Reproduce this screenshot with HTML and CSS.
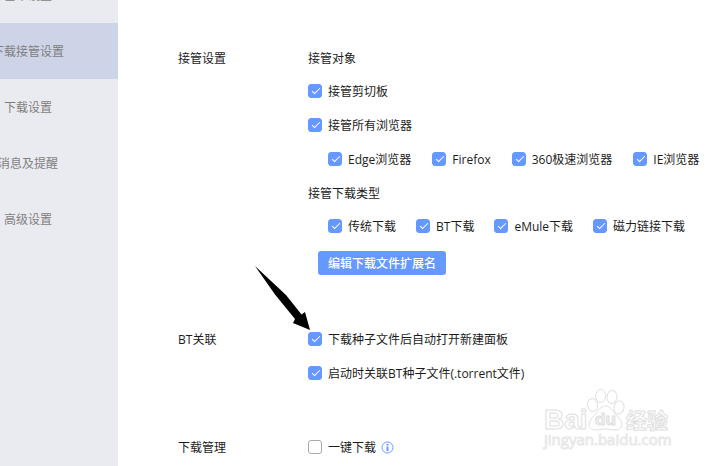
FILE: index.html
```html
<!DOCTYPE html>
<html lang="zh-CN">
<head>
<meta charset="utf-8">
<title>下载接管设置</title>
<link rel="stylesheet" href="styles.css">
</head>
<body>
<div class="app">
  <nav class="sidebar">
    <a class="nav-item" href="#basic">基本设置</a>
    <a class="nav-item active" href="#takeover">下载接管设置</a>
    <a class="nav-item" href="#download">下载设置</a>
    <a class="nav-item" href="#message">消息及提醒</a>
    <a class="nav-item" href="#advanced">高级设置</a>
  </nav>
  <main class="content">
    <section class="section">
      <h2 class="title">接管设置</h2>
      <div>
        <h3 class="title">接管对象</h3>
        <div class="row"><label class="check"><input type="checkbox" checked>接管剪切板</label></div>
        <div class="row"><label class="check"><input type="checkbox" checked>接管所有浏览器</label></div>
        <div class="row nested browsers">
          <label class="check"><input type="checkbox" checked><span><span class="latin">Edge</span>浏览器</span></label>
          <label class="check"><input type="checkbox" checked><span><span class="latin">Firefox</span></span></label>
          <label class="check"><input type="checkbox" checked><span><span class="latin">360</span>极速浏览器</span></label>
          <label class="check"><input type="checkbox" checked><span><span class="latin">IE</span>浏览器</span></label>
        </div>
        <h3 class="title">接管下载类型</h3>
        <div class="row nested">
          <label class="check"><input type="checkbox" checked>传统下载</label>
          <label class="check"><input type="checkbox" checked><span><span class="latin">BT</span>下载</span></label>
          <label class="check"><input type="checkbox" checked><span><span class="latin">eMule</span>下载</span></label>
          <label class="check"><input type="checkbox" checked>磁力链接下载</label>
        </div>
        <button class="button" type="button">编辑下载文件扩展名</button>
      </div>
    </section>
    <section class="section">
      <h2 class="title"><span class="latin">BT</span>关联</h2>
      <div>
        <div class="row pointed">
          <label class="check"><input type="checkbox" checked>下载种子文件后自动打开新建面板</label>
          <svg class="arrow" width="56" height="65" viewBox="0 0 56 65" aria-hidden="true"><path d="M0 0L31 29 46.500 48.500 50 46 55 64 38 57 40 53 20 28.500z"/></svg>
        </div>
        <div class="row"><label class="check"><input type="checkbox" checked><span>启动时关联<span class="latin">BT</span>种子文件<span class="latin">(.torrent</span>文件<span class="latin">)</span></span></label></div>
      </div>
    </section>
    <section class="section">
      <h2 class="title">下载管理</h2>
      <div>
        <div class="row">
          <label class="check"><input type="checkbox">一键下载</label>
          <svg class="info" width="13" height="13" viewBox="0 0 13 13" aria-hidden="true"><circle cx="6.500" cy="6.500" r="5.500"/><path d="M6.500 5.500v4.500M6.500 3v1.500"/></svg>
        </div>
      </div>
    </section>
  </main>
  <svg class="watermark" width="130" height="64" viewBox="0 0 130 64" aria-hidden="true">
    <text class="brand" x="2" y="41" font-size="28">Bai</text>
    <g>
      <ellipse cx="50.500" cy="17" rx="5" ry="6.500" transform="rotate(-8 50.500 17)"/>
      <ellipse cx="58.700" cy="8" rx="5" ry="6.500"/>
      <ellipse cx="70" cy="9" rx="5" ry="6.500" transform="rotate(8 70 9)"/>
      <ellipse cx="77" cy="19.500" rx="5" ry="6.500" transform="rotate(10 77 19.500)"/>
      <path d="M63.500 18C57 18 56 25 51 29 45 34 46 42 54 42 58 42 60 41 63.500 41S69 42 73 42C81 42 82 34 76 29 71 25 70 18 63.500 18z"/>
    </g>
    <text class="brand du" x="53" y="37" font-size="17">du</text>
    <text class="brand cjk" x="84" y="40" font-size="21">经验</text>
    <text class="site" x="2" y="57" font-size="15">jingyan.baidu.com</text>
  </svg>
</div>
</body>
</html>
```
FILE: styles.css
```css
* {
  box-sizing: border-box;
}

body {
  margin: 0;
  background: #fff;
  color: #1c1c1c;
  font: 12px/16px "Noto Sans CJK SC", sans-serif;
}

.app {
  position: relative;
  display: flex;
  height: 100vh;
  overflow: hidden;
}

.sidebar {
  flex: none;
  width: 180px;
  margin: -33px 0 0 -62px;
  background: #eaebf0;
}

.nav-item {
  display: block;
  color: #7f7f80;
  line-height: 56px;
  text-align: center;
  text-decoration: none;
}

.nav-item.active {
  background: #ced4e7;
}

.content {
  flex: 1;
  padding: 41px 0 0 60px;
  white-space: nowrap;
}

.section {
  display: grid;
  grid-template-columns: 130px 1fr;
  margin-bottom: 40px;
}

.title {
  margin: 1px 0 0;
  font-size: 12px;
  font-weight: 400;
  line-height: 32px;
}

.row {
  display: flex;
  align-items: center;
  gap: 5px;
  height: 34px;
}

.nested {
  gap: 20px;
  margin-left: 20px;
}

.browsers {
  gap: 21px;
}

.check {
  display: flex;
  align-items: center;
  gap: 6px;
}

.latin {
  font-family: "Open Sans", sans-serif;
}

.check input {
  appearance: none;
  position: relative;
  width: 14px;
  height: 14px;
  margin: 0;
  border: 1px solid #aaa;
  border-radius: 3px;
  background: #fff;
}

.check input:checked {
  border-color: #6699ff;
  background: #6699ff;
}

.check input:checked::after {
  content: "";
  position: absolute;
  left: 5px;
  top: 1px;
  width: 3px;
  height: 7px;
  border: solid #fff;
  border-width: 0 1px 1px 0;
  transform: rotate(45deg);
}

.button {
  display: block;
  height: 24px;
  margin: 8px 0 7px 10px;
  padding: 0 10px;
  border: 0;
  border-radius: 3px;
  background: #6699ff;
  color: #fff;
  font: 500 12px/24px "Noto Sans CJK SC", sans-serif;
}

.pointed {
  position: relative;
}

.arrow {
  position: absolute;
  left: -53px;
  top: -56px;
}

.info {
  fill: none;
  stroke: #6699ff;
}

.info path {
  stroke-width: 2;
}

.watermark {
  position: absolute;
  right: 38px;
  bottom: 14px;
  fill: #fff;
  stroke: #e0e0e0;
}

.brand {
  font-family: "Liberation Sans", sans-serif;
  font-weight: 700;
}

.du {
  fill: #f0f0f0;
}

.cjk {
  font-family: "Noto Sans CJK SC", sans-serif;
}

.site {
  font-family: "Open Sans", sans-serif;
  stroke: #e8e8e8;
}
```
